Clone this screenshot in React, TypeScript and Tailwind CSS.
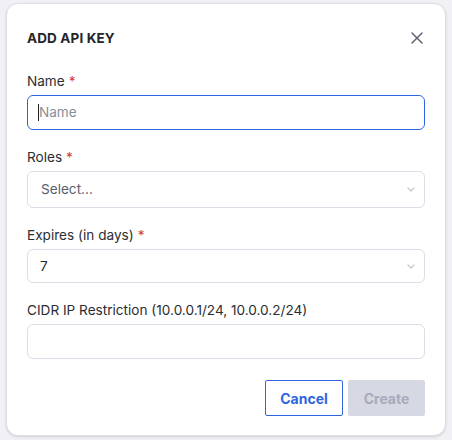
import React from "react";

const Required = () => <span className="ml-1 text-[#d03a3a]">*</span>;

const Chevron = () => (
  <svg width="8" height="5" viewBox="0 0 8 5" fill="none" className="text-[#c4c6d0]">
    <path d="M1 1l3 3 3-3" stroke="currentColor" strokeWidth="1.2" strokeLinecap="round" strokeLinejoin="round" />
  </svg>
);

const Field = ({ label, required, children, className = "" }: { label: string; required?: boolean; children: React.ReactNode; className?: string }) => (
  <div className={className}>
    <label className="block text-[13.6px] leading-5 text-[#2b2d33]">
      {label}
      {required && <Required />}
    </label>
    <div className="mt-[4px]">{children}</div>
  </div>
);

export default function App() {
  return (
    <div className="h-[440px] w-[452px] bg-[#f1f1f5] px-[6px] pt-[3px]" style={{ fontFamily: "Inter, 'Noto Sans', sans-serif" }}>
      <div className="h-[433px] rounded-[12px] border border-[#dcdde6] bg-white px-5 pt-[24px] shadow-sm">
        <div className="flex items-center justify-between">
          <h2 className="text-[13.5px] font-bold leading-4 tracking-[0.01em] text-[#23252b]">ADD API KEY</h2>
          <button className="mr-[-2px] flex h-5 w-5 items-center justify-center text-[#5f6374]">
            <svg width="12" height="12" viewBox="0 0 12 12" fill="none">
              <path d="M1 1l10 10M11 1L1 11" stroke="currentColor" strokeWidth="1.5" strokeLinecap="round" />
            </svg>
          </button>
        </div>

        <Field label="Name" required className="mt-[23px]">
          <div className="flex h-[35px] items-center rounded-[6px] border-[1.5px] border-[#2f66e0] px-[10px]">
            <span className="h-[17px] w-px bg-[#222]" />
            <span className="text-[13.6px] text-[#8a8d99]">Name</span>
          </div>
        </Field>

        <Field label="Roles" required className="mt-[17px]">
          <div className="flex h-[37px] items-center justify-between rounded-[6px] border border-[#dcdde6] pl-[13px] pr-[9px]">
            <span className="text-[13.6px] text-[#5b5e6b]">Select...</span>
            <Chevron />
          </div>
        </Field>

        <Field label="Expires (in days)" required className="mt-[17px]">
          <div className="flex h-[34px] items-center justify-between rounded-[6px] border border-[#dcdde6] pl-[12px] pr-[9px]">
            <span className="text-[13.6px] text-[#23252b]">7</span>
            <Chevron />
          </div>
        </Field>

        <Field label="CIDR IP Restriction (10.0.0.1/24, 10.0.0.2/24)" className="mt-[17px]">
          <div className="h-[35px] rounded-[6px] border border-[#dcdde6]" />
        </Field>

        <div className="mt-[21px] flex justify-end gap-[5px]">
          <button className="h-[36px] w-[78px] rounded-[2px] border border-[#2f66e0] text-[14px] font-bold text-[#2f66e0]">Cancel</button>
          <button className="h-[36px] w-[77px] rounded-[2px] bg-[#d6d8e3] text-[14px] font-bold text-[#a7aabb]">Create</button>
        </div>
      </div>
    </div>
  );
}
